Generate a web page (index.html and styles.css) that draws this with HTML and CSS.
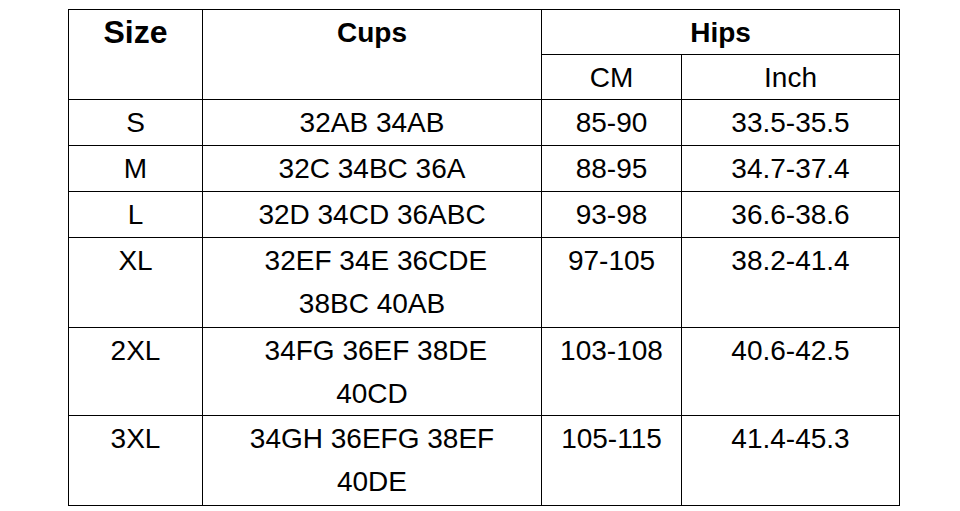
FILE: index.html
```html
<!DOCTYPE html>
<html>
<head>
<meta charset="utf-8">
<link rel="stylesheet" href="styles.css">
</head>
<body>
<table class="size-table">
  <colgroup>
    <col class="c-size">
    <col class="c-cups">
    <col class="c-cm">
    <col class="c-inch">
  </colgroup>
  <tr class="rh">
    <th rowspan="2" class="big">Size</th>
    <th rowspan="2">Cups</th>
    <th colspan="2">Hips</th>
  </tr>
  <tr class="rh">
    <td>CM</td>
    <td>Inch</td>
  </tr>
  <tr class="r1"><td>S</td><td>32AB 34AB</td><td>85-90</td><td>33.5-35.5</td></tr>
  <tr class="r1"><td>M</td><td>32C 34BC 36A</td><td>88-95</td><td>34.7-37.4</td></tr>
  <tr class="r1"><td>L</td><td>32D 34CD 36ABC</td><td>93-98</td><td>36.6-38.6</td></tr>
  <tr class="r2"><td>XL</td><td>&nbsp;32EF 34E 36CDE<br>38BC 40AB</td><td>97-105</td><td>38.2-41.4</td></tr>
  <tr class="r2b"><td>2XL</td><td>&nbsp;34FG 36EF 38DE<br>40CD</td><td>103-108</td><td>40.6-42.5</td></tr>
  <tr class="r2"><td>3XL</td><td>34GH 36EFG 38EF<br>40DE</td><td>105-115</td><td>41.4-45.3</td></tr>
</table>
</body>
</html>
```
FILE: styles.css
```css
html, body {
  margin: 0;
  padding: 0;
  background: #ffffff;
}
body {
  font-family: "Liberation Sans", Arial, sans-serif;
  color: #000000;
}
.size-table {
  margin: 9px 0 0 68px;
  border-collapse: collapse;
  table-layout: fixed;
  width: 831px;
}
.c-size { width: 134px; }
.c-cups { width: 339px; }
.c-cm { width: 140px; }
.c-inch { width: 218px; }
.size-table th,
.size-table td {
  border: 1px solid #000000;
  padding: 1px 0 0 0;
  text-align: center;
  vertical-align: top;
  font-size: 28px;
  line-height: 43px;
  font-weight: normal;
}
.size-table th {
  font-weight: bold;
}
.size-table th.big {
  font-size: 32px;
}
.rh { height: 45px; }
.r1 { height: 46px; }
.r2 { height: 90px; }
.r2b { height: 88px; }
```
